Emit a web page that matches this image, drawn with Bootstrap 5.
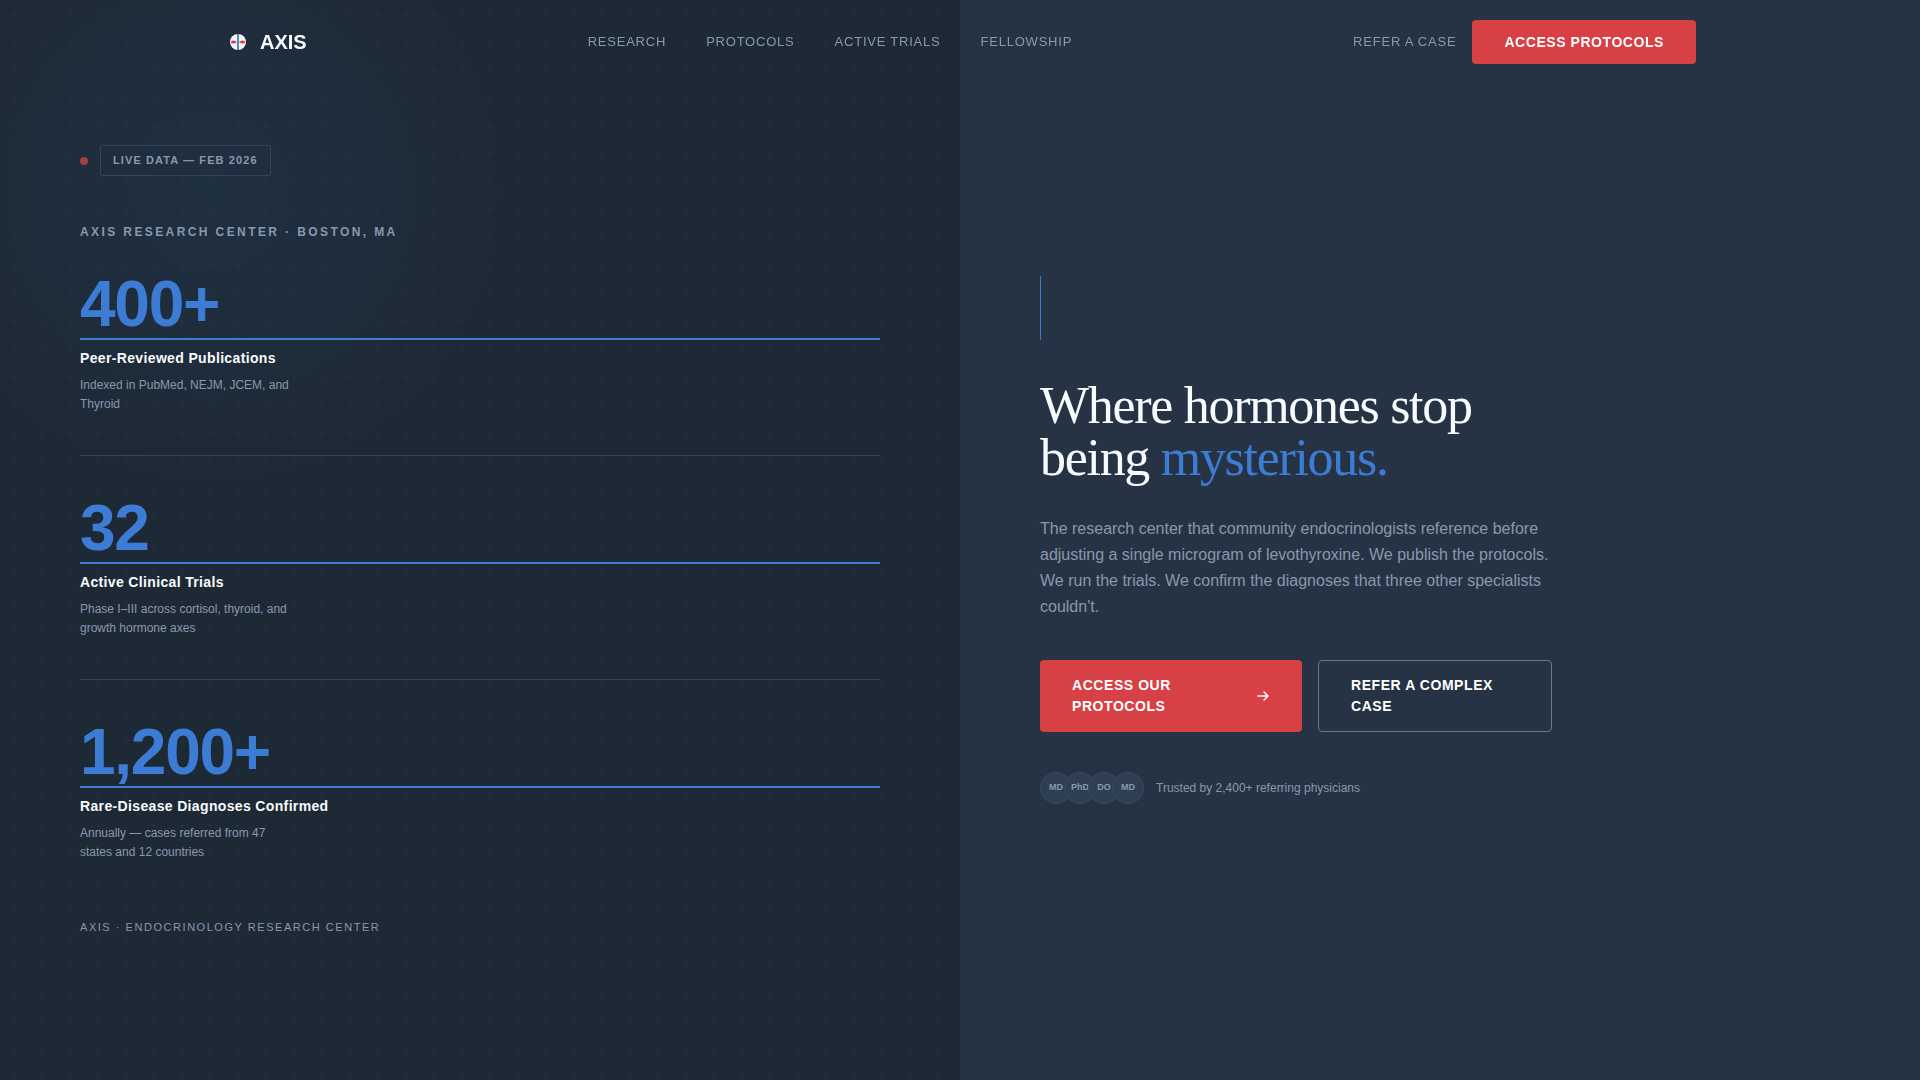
<!DOCTYPE html>
<html lang="en">
<head>
<meta charset="utf-8">
<meta name="viewport" content="width=device-width, initial-scale=1">
<title>AXIS Endocrinology Research Center</title>
<link href="https://cdn.jsdelivr.net/npm/bootstrap@5.3.0/dist/css/bootstrap.min.css" rel="stylesheet">
<style>
  :root { --ink: #1e2936; --slate: #263344; --mist: #8899ae; --snow: #f8fbfe; --azure: #3d7cd4; --signal: #d74045; }
  body { background: var(--slate); color: var(--snow); font-family: "Liberation Sans", Arial, sans-serif; }

  .site-bar { padding: 20px 0; }
  .site-bar-inner { max-width: 1536px; padding: 0 32px; }
  .site-brand { font-size: 20px; line-height: 28px; color: var(--snow); }
  .site-link { font-size: 13px; line-height: 20px; letter-spacing: .06em; color: var(--mist); }
  .site-menu { gap: 40px; }

  .cta { font-size: 14px; line-height: 21px; font-weight: 700; letter-spacing: .04em; text-transform: uppercase;
         border-radius: 4px; padding: 14px 32px; color: #fff; text-align: left; }
  .cta-red, .cta-red:hover { background: var(--signal); color: #fff; border: 0; }
  .cta-line, .cta-line:hover { background: transparent; color: #fff; border: 1px solid #68778c; flex: 0 0 234px; }
  .cta-nav { padding: 12px 32px; line-height: 20px; }
  .cta-row { min-height: 72px; }

  .panel { padding: 80px; }
  .panel-data { background-color: var(--ink);
    background-image:
      radial-gradient(circle at 14px 14px, rgba(61,124,214,.08) 1px, transparent 2px),
      radial-gradient(circle at 210px 190px, rgba(34,66,94,.28), transparent 290px);
    background-size: 28px 28px, 100% 100%; }

  .live-dot { width: 8px; height: 8px; border-radius: 50%; background: #a33e48; }
  .live-tag { font-size: 11px; line-height: 17px; font-weight: 700; letter-spacing: .1em; color: var(--mist);
              border: 1px solid #33435a; border-radius: 2px; padding: 6px 12px; }
  .live-row { gap: 12px; margin-bottom: 48px; }
  .kicker { font-size: 12px; line-height: 16px; font-weight: 700; letter-spacing: .2em; color: var(--mist); margin-bottom: 32px; }

  .stat + .stat { border-top: 1px solid #364456; padding-top: 40px; margin-top: 41px; }
  .stat-figure { font-size: 64px; line-height: 64px; font-weight: 700; letter-spacing: -.02em; color: var(--azure);
                 border-bottom: 2px solid var(--azure); padding-bottom: 2px; margin-bottom: 8px; }
  .stat-name { font-size: 14px; line-height: 21px; font-weight: 700; letter-spacing: .025em; margin-bottom: 7px; }
  .stat-note { font-size: 12px; line-height: 19px; max-width: 220px; color: var(--mist); }
  .colophon { font-size: 11px; line-height: 16px; letter-spacing: .14em; color: var(--mist); margin-top: 57px; }

  .pitch { max-width: 512px; }
  .pitch-rule { width: 1px; height: 64px; background: var(--azure); margin-bottom: 40px; }
  .pitch-title { font-family: "Liberation Serif", "Times New Roman", serif; font-size: 52px; line-height: 52px; font-weight: 400;
                 letter-spacing: -.025em; margin-bottom: 32px; color: var(--snow); }
  .pitch-title em { font-style: normal; color: var(--azure); }
  .pitch-copy { font-size: 16px; line-height: 26px; color: var(--mist); margin-bottom: 40px; }
  .trust { gap: 12px; margin-top: 40px; font-size: 12px; line-height: 18px; color: var(--mist); }
  .face { width: 32px; height: 32px; border-radius: 50%; background: #2e3f53; border: 1px solid #374a60;
          font-size: 9px; line-height: 12px; font-weight: 700; padding-bottom: 2px; }
  .face + .face { margin-left: -8px; }
</style>
</head>
<body>
<header class="fixed-top site-bar">
  <nav class="site-bar-inner mx-auto d-flex align-items-center justify-content-between" aria-label="Main">
    <a class="site-brand d-flex align-items-center gap-2 fw-bold text-decoration-none" href="#">
      <svg width="28" height="28" viewBox="0 0 28 28" aria-hidden="true">
        <circle cx="14" cy="14" r="8" fill="#eef4f9"/>
        <path d="M7 14h14" stroke="#d94045" stroke-width="1" opacity=".55"/>
        <ellipse cx="9.500" cy="14" rx="2.500" ry="1.500" fill="#d94045"/>
        <ellipse cx="18.500" cy="14" rx="2.500" ry="1.500" fill="#d94045"/>
        <path d="M14 6v16" stroke="#5f87b3" stroke-width="2"/>
      </svg>
      <span>AXIS</span>
    </a>
    <div class="site-menu d-flex">
      <a class="site-link text-decoration-none" href="#">RESEARCH</a>
      <a class="site-link text-decoration-none" href="#">PROTOCOLS</a>
      <a class="site-link text-decoration-none" href="#">ACTIVE TRIALS</a>
      <a class="site-link text-decoration-none" href="#">FELLOWSHIP</a>
    </div>
    <div class="d-flex align-items-center gap-3">
      <a class="site-link text-decoration-none" href="#">REFER A CASE</a>
      <button type="button" class="btn cta cta-red cta-nav">Access Protocols</button>
    </div>
  </nav>
</header>

<main class="row g-0 min-vh-100">
  <section class="col-6 panel panel-data d-flex flex-column justify-content-center">
    <div class="live-row d-flex align-items-center">
      <span class="live-dot"></span>
      <span class="live-tag">LIVE DATA — FEB 2026</span>
    </div>
    <div class="kicker">AXIS RESEARCH CENTER · BOSTON, MA</div>
    <div class="stat">
      <div class="stat-figure">400+</div>
      <div class="stat-name">Peer-Reviewed Publications</div>
      <div class="stat-note">Indexed in PubMed, NEJM, JCEM, and Thyroid</div>
    </div>
    <div class="stat">
      <div class="stat-figure">32</div>
      <div class="stat-name">Active Clinical Trials</div>
      <div class="stat-note">Phase I–III across cortisol, thyroid, and growth hormone axes</div>
    </div>
    <div class="stat">
      <div class="stat-figure">1,200+</div>
      <div class="stat-name">Rare-Disease Diagnoses Confirmed</div>
      <div class="stat-note">Annually — cases referred from 47 states and 12 countries</div>
    </div>
    <div class="colophon">AXIS · ENDOCRINOLOGY RESEARCH CENTER</div>
  </section>

  <section class="col-6 panel d-flex flex-column justify-content-center">
    <div class="pitch">
      <div class="pitch-rule"></div>
      <h1 class="pitch-title">Where hormones stop being <em>mysterious.</em></h1>
      <p class="pitch-copy">The research center that community endocrinologists reference before adjusting a single microgram of levothyroxine. We publish the protocols. We run the trials. We confirm the diagnoses that three other specialists couldn't.</p>
      <div class="cta-row d-flex gap-3">
        <button type="button" class="btn cta cta-red d-flex align-items-center justify-content-between gap-2 flex-fill">
          <span>Access our protocols</span>
          <svg class="flex-shrink-0" width="14" height="14" viewBox="0 0 14 14" fill="none" stroke="#fff" stroke-width="1.500" stroke-linecap="round" stroke-linejoin="round" aria-hidden="true">
            <path d="M2 7h10M8 3l4 4-4 4"/>
          </svg>
        </button>
        <button type="button" class="btn cta cta-line">Refer a complex case</button>
      </div>
      <div class="trust d-flex align-items-center">
        <div class="d-flex">
          <span class="face d-flex align-items-center justify-content-center">MD</span>
          <span class="face d-flex align-items-center justify-content-center">PhD</span>
          <span class="face d-flex align-items-center justify-content-center">DO</span>
          <span class="face d-flex align-items-center justify-content-center">MD</span>
        </div>
        <span>Trusted by 2,400+ referring physicians</span>
      </div>
    </div>
  </section>
</main>
<script src="https://cdn.jsdelivr.net/npm/bootstrap@5.3.0/dist/js/bootstrap.bundle.min.js"></script>
</body>
</html>
